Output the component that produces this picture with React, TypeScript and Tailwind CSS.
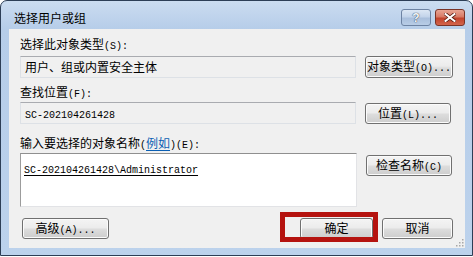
import React from "react";

const cjk = "font-['Noto_Sans_CJK_SC','Noto_Sans',sans-serif]";

// half-width latin text, like the bitmap font of the original dialog
function M({ children }: { children: React.ReactNode }) {
  return (
    <span className="font-['Liberation_Mono','Noto_Sans_CJK_SC',monospace] text-[10px]">
      {children}
    </span>
  );
}

function Btn({
  children,
  className = "",
}: {
  children: React.ReactNode;
  className?: string;
}) {
  return (
    <button
      className={
        "flex items-baseline justify-center overflow-hidden whitespace-nowrap rounded-[3px] border border-[#707070] bg-[linear-gradient(180deg,#f4f4f4_0%,#ececec_45%,#dcdcdc_55%,#cdcdcd_100%)] pt-[2px] shadow-[inset_0_0_0_1px_#fbfbfb] text-[12px] leading-[14px] text-black " +
        className
      }
    >
      {children}
    </button>
  );
}

function Field({ children }: { children: React.ReactNode }) {
  return (
    <div className="h-[22px] w-[336px] border border-[#dde1e6] border-t-[#a9abb0] bg-[#f0f0f0] pl-[4px] pt-[3px]">
      <div className="h-[14px] leading-[14px]">{children}</div>
    </div>
  );
}

function Label({ children, className = "" }: { children: React.ReactNode; className?: string }) {
  return <div className={"h-[14px] leading-[14px] " + className}>{children}</div>;
}

export default function App() {
  return (
    <div className={"relative h-[257px] w-[473px] bg-white " + cjk}>
      <div className="flex h-[256px] w-[473px] flex-col rounded-t-[7px] border border-[#2d3e56] bg-[linear-gradient(180deg,#cbdcf0_0%,#b6cde9_28px,#bcd2ec_100%)] pb-[7px] pl-[8px] pr-[7px]">
        {/* title bar */}
        <div className="flex h-[28px] shrink-0 items-start justify-between">
          <span className="h-[14px] pl-[5px] pt-[10px] text-[12px] leading-[14px] text-black">
            选择用户或组
          </span>
          <div className="flex gap-[4px] pt-[8px]">
            <div className="flex h-[17px] w-[30px] items-center justify-center rounded-[3px] border border-[#6d83a3] bg-[linear-gradient(180deg,#dce7f4_0%,#c3d4ea_45%,#a9bfdc_55%,#b8cde6_100%)]">
              <span className="font-['Liberation_Sans',sans-serif] text-[12px] font-bold leading-none text-[#f4f6f9] [text-shadow:0_0_1px_#34445c,0_0_1px_#34445c]">
                ?
              </span>
            </div>
            <div className="flex h-[17px] w-[30px] items-center justify-center rounded-[3px] border border-[#7a3326] bg-[linear-gradient(180deg,#e8a493_0%,#d87a66_45%,#c2432c_55%,#d3654c_100%)]">
              <svg width="12" height="9" viewBox="0 0 12 9">
                <path
                  d="M1.5 1 L10.5 8 M10.5 1 L1.5 8"
                  stroke="#5b1e14"
                  strokeWidth="3.6"
                  strokeLinecap="square"
                />
                <path
                  d="M1.5 1 L10.5 8 M10.5 1 L1.5 8"
                  stroke="#ffffff"
                  strokeWidth="2"
                  strokeLinecap="square"
                />
              </svg>
            </div>
          </div>
        </div>

        {/* client area */}
        <div className="relative flex flex-1 flex-col bg-[#f0f0f0] pl-[11px] pr-[12px] pt-[8px] text-[12px] text-black">
          <Label>
            选择此对象类型<M>(S):</M>
          </Label>
          <div className="mt-[5px] flex items-center gap-[9px]">
            <Field>用户、组或内置安全主体</Field>
            <Btn className="h-[22px] w-[88px]">
              对象类型<M>(O)...</M>
            </Btn>
          </div>

          <Label className="mt-[7px]">
            查找位置<M>(F):</M>
          </Label>
          <div className="mt-[3px] flex items-center gap-[9px]">
            <Field>
              <M>SC-202104261428</M>
            </Field>
            <Btn className="h-[21px] w-[86px]">
              位置<M>(L)...</M>
            </Btn>
          </div>

          <Label className="mt-[12px]">
            输入要选择的对象名称<M>(</M>
            <span className="text-[#0b5fb3] underline underline-offset-2">例如</span>
            <M>)(E):</M>
          </Label>
          <div className="mt-[3px] flex items-start gap-[9px]">
            <div className="h-[54px] w-[337px] border border-[#e2e3e6] border-l-[#9c9c9c] border-t-[#8f8f8f] bg-white pl-[3px] pt-[7px]">
              <div className="h-[14px] leading-[14px]">
                <span className="underline underline-offset-2">
                  <M>SC-202104261428\Administrator</M>
                </span>
              </div>
            </div>
            <Btn className="mt-[2px] h-[21px] w-[86px]">
              检查名称<M>(C)</M>
            </Btn>
          </div>

          <div className="mt-[11px] flex items-center">
            <Btn className="ml-[2px] h-[21px] w-[87px]">
              高级<M>(A)...</M>
            </Btn>
            <div className="flex-1" />
            <Btn className="h-[21px] w-[73px]">确定</Btn>
            <Btn className="ml-[9px] h-[21px] w-[71px]">取消</Btn>
          </div>

          {/* red highlight around OK */}
          <div className="absolute left-[271px] top-[183px] h-[30px] w-[98px] border-[5px] border-[#b5130f]" />

          {/* size grip */}
          <svg
            className="absolute bottom-[1px] right-[1px]"
            width="10"
            height="10"
            viewBox="0 0 10 10"
          >
            {[
              [8, 2],
              [5, 5],
              [8, 5],
              [2, 8],
              [5, 8],
              [8, 8],
            ].map(([x, y], i) => (
              <rect key={i} x={x} y={y} width="1.5" height="1.5" fill="#a8a8a8" />
            ))}
          </svg>
        </div>
      </div>
    </div>
  );
}
